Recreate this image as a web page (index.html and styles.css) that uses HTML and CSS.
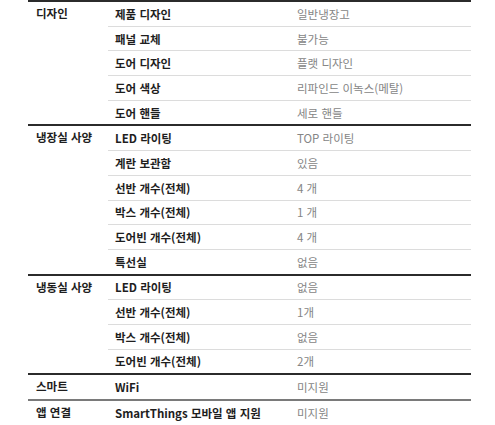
FILE: index.html
```html
<!DOCTYPE html>
<html lang="ko">
<head>
<meta charset="utf-8">
<link rel="stylesheet" href="styles.css">
</head>
<body>
<div class="spec">
  <div class="section">
    <div class="cat">디자인</div>
    <div class="rows">
      <div class="row"><div class="key">제품 디자인</div><div class="val">일반냉장고</div></div>
      <div class="row"><div class="key">패널 교체</div><div class="val">불가능</div></div>
      <div class="row"><div class="key">도어 디자인</div><div class="val">플랫 디자인</div></div>
      <div class="row"><div class="key">도어 색상</div><div class="val">리파인드 이녹스(메탈)</div></div>
      <div class="row"><div class="key">도어 핸들</div><div class="val">세로 핸들</div></div>
    </div>
  </div>
  <div class="section">
    <div class="cat">냉장실 사양</div>
    <div class="rows">
      <div class="row"><div class="key">LED 라이팅</div><div class="val">TOP 라이팅</div></div>
      <div class="row"><div class="key">계란 보관함</div><div class="val">있음</div></div>
      <div class="row"><div class="key">선반 개수(전체)</div><div class="val">4 개</div></div>
      <div class="row"><div class="key">박스 개수(전체)</div><div class="val">1 개</div></div>
      <div class="row"><div class="key">도어빈 개수(전체)</div><div class="val">4 개</div></div>
      <div class="row"><div class="key">특선실</div><div class="val">없음</div></div>
    </div>
  </div>
  <div class="section">
    <div class="cat">냉동실 사양</div>
    <div class="rows">
      <div class="row"><div class="key">LED 라이팅</div><div class="val">없음</div></div>
      <div class="row"><div class="key">선반 개수(전체)</div><div class="val">1개</div></div>
      <div class="row"><div class="key">박스 개수(전체)</div><div class="val">없음</div></div>
      <div class="row"><div class="key">도어빈 개수(전체)</div><div class="val">2개</div></div>
    </div>
  </div>
  <div class="section">
    <div class="cat">스마트</div>
    <div class="rows">
      <div class="row"><div class="key">WiFi</div><div class="val">미지원</div></div>
    </div>
  </div>
  <div class="section section-gray">
    <div class="cat">앱 연결</div>
    <div class="rows">
      <div class="row"><div class="key">SmartThings 모바일 앱 지원</div><div class="val">미지원</div></div>
    </div>
  </div>
</div>
</body>
</html>
```

FILE: styles.css
```css
html, body {
  margin: 0;
  padding: 0;
  background: #fff;
}
body {
  font-family: "Noto Sans CJK KR", "Noto Sans", sans-serif;
  font-size: 11.5px;
}
.spec {
  margin-left: 28px;
  width: 443px;
  border-bottom: 2px solid #2b2b2b;
}
.section {
  display: flex;
  border-top: 2px solid #2b2b2b;
}
.section-gray {
  border-top-color: #7a7a7a;
}
.cat {
  width: 80px;
  flex: none;
  box-sizing: border-box;
  padding-left: 8px;
  height: 23.7px;
  line-height: 23.7px;
  font-weight: 700;
  color: #1e1e1e;
}
.rows {
  flex: 1;
  display: flex;
  flex-direction: column;
}
.row {
  display: flex;
  height: 23.7px;
  align-items: center;
  border-bottom: 1px solid #dcdcdc;
}
.row:last-child {
  border-bottom: none;
}
.key {
  width: 182px;
  flex: none;
  box-sizing: border-box;
  padding-left: 7px;
  font-weight: 700;
  color: #1e1e1e;
}
.val {
  padding-left: 7px;
  font-weight: 400;
  color: #858585;
}
```
